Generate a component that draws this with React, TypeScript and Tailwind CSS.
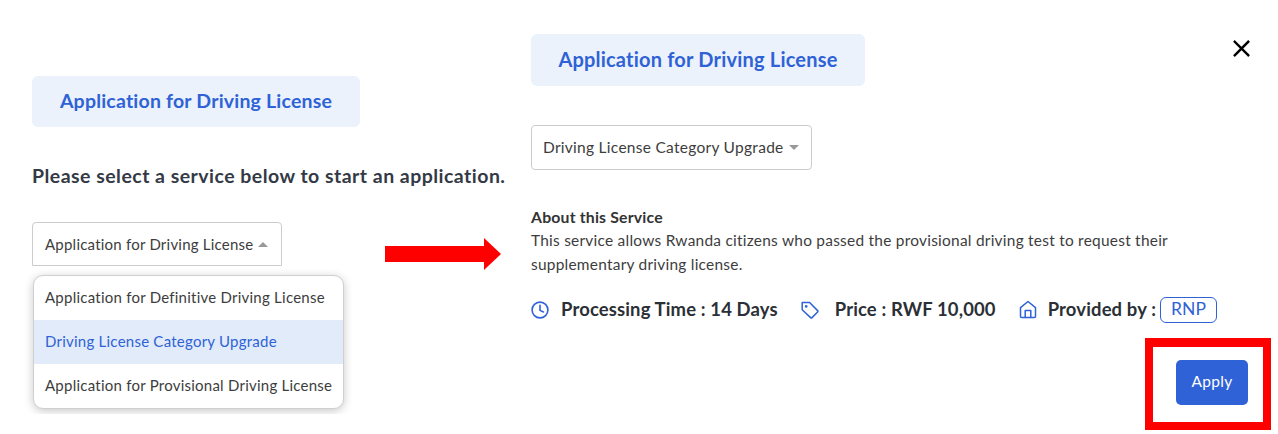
import React from "react";

function Caret({ up }: { up?: boolean }) {
  return (
    <svg width="10" height="5" viewBox="0 0 10 5" className="shrink-0">
      <path d={up ? "M0 5 L5 0 L10 5 Z" : "M0 0 L5 5 L10 0 Z"} fill="#999999" />
    </svg>
  );
}

export default function App() {
  return (
    <div className="relative flex h-[434px] w-[1278px] overflow-hidden bg-white font-['Lato',sans-serif] text-[#3d3d3d]">
      {/* left column */}
      <div className="h-[414px] w-[531px] shrink-0 pt-[76px]">
        <div className="ml-[32px] flex h-[51px] w-[328px] items-center justify-center rounded-[6px] bg-[#ebf2fb] pb-[2px] text-[19.5px] font-bold text-[#2f62d6] tracking-[0.01em]">
          Application for Driving License
        </div>
        <div className="ml-[32px] mt-[37px] text-[19.5px] leading-[24px] font-bold tracking-[0.024em] text-[#343a45] whitespace-nowrap">
          Please select a service below to start an application.
        </div>
        <div className="ml-[32px] mt-[34px] flex h-[44px] w-[250px] items-center gap-[5px] rounded-t-[4px] border border-[#cccccc] pl-[12px] text-[15px] tracking-[0.015em] whitespace-nowrap">
          Application for Driving License
          <Caret up />
        </div>
        <div className="ml-[24px] h-[148px] w-[340px] overflow-hidden pl-[9px] pt-[9px]">
          <div className="w-[311px] overflow-hidden rounded-[10px] border border-[#d0d0d0] bg-white text-[15px] tracking-[0.016em] shadow-[0_2px_10px_rgba(0,0,0,0.22)]">
            <div className="flex h-[44px] items-center pb-[2px] pl-[11px] whitespace-nowrap">Application for Definitive Driving License</div>
            <div className="flex h-[44px] items-center bg-[#e1ebfa] pb-[2px] pl-[11px] text-[#2f62d6] whitespace-nowrap">Driving License Category Upgrade</div>
            <div className="flex h-[44px] items-center pb-[2px] pl-[11px] whitespace-nowrap">Application for Provisional Driving License</div>
          </div>
        </div>
      </div>

      {/* right column */}
      <div className="flex-1 pt-[34px]">
        <div className="flex h-[52px] w-[334px] items-center justify-center rounded-[6px] bg-[#ebf2fb] pb-[2px] text-[20px] font-bold tracking-[0.01em] text-[#2f62d6]">
          Application for Driving License
        </div>
        <div className="mt-[39px] flex h-[45px] w-[281px] items-center gap-[5px] rounded-[4px] border border-[#cccccc] pl-[11px] text-[15.5px] tracking-[0.018em] whitespace-nowrap">
          Driving License Category Upgrade
          <Caret />
        </div>
        <div className="mt-[37px] text-[15.8px] font-bold leading-[20px] tracking-[0.012em] text-[#333333]">About this Service</div>
        <div className="mt-[1px] w-[680px] text-[15.45px] leading-[24px] tracking-[0.016em]">
          This service allows Rwanda citizens who passed the provisional driving test to request their supplementary driving license.
        </div>
        <div className="mt-[20px] flex h-[27px] items-center text-[18.45px] font-bold tracking-[0.008em] text-[#2b2f36] whitespace-nowrap">
          <svg width="18" height="18" viewBox="0 0 18 18" fill="none" stroke="#2f62d6" strokeWidth="1.6" strokeLinecap="round" strokeLinejoin="round">
            <circle cx="9" cy="9" r="7.9" />
            <path d="M9 4.4V9.4L12.4 11" />
          </svg>
          <span className="ml-[12px]">Processing Time : 14 Days</span>
          <svg className="ml-[23px]" width="18" height="18" viewBox="0 0 18 18" fill="none" stroke="#2f62d6" strokeWidth="1.5" strokeLinecap="round" strokeLinejoin="round">
            <path d="M1.2 1.5H8.6L16.6 9.6A1 1 0 0 1 16.6 11L11 16.6A1 1 0 0 1 9.6 16.6L1.2 8.8Z" />
            <circle cx="5.2" cy="5.4" r="0.6" fill="#2f62d6" />
          </svg>
          <span className="ml-[16px]">Price : RWF 10,000</span>
          <svg className="ml-[23px]" width="18" height="19" viewBox="0 0 18 19" fill="none" stroke="#2f62d6" strokeWidth="1.5" strokeLinecap="round" strokeLinejoin="round">
            <path d="M1.5 7.6L9 1.5L16.5 7.6V16.6A1 1 0 0 1 15.5 17.6H2.5A1 1 0 0 1 1.5 16.6Z" />
            <path d="M6.2 17.5V10.4H11.8V17.5" />
          </svg>
          <span className="ml-[11px]">Provided by :</span>
          <span className="ml-[4px] flex h-[26px] w-[57px] items-center justify-center rounded-[6px] border border-[#2f62d6] text-[17.5px] font-normal text-[#2f62d6]">RNP</span>
        </div>
        <div className="mt-[37px] flex justify-end pr-[30px]">
          <button className="h-[45px] w-[72px] rounded-[5px] bg-[#2f62d6] pb-[1px] text-[15.5px] tracking-[0.018em] text-white">Apply</button>
        </div>
      </div>

      {/* close */}
      <svg className="absolute left-[1233px] top-[40px]" width="17" height="17" viewBox="0 0 17 17" stroke="#000000" strokeWidth="2.4" strokeLinecap="square">
        <path d="M1.8 1.8L15.2 15.2M15.2 1.8L1.8 15.2" />
      </svg>

      {/* annotations */}
      <svg className="absolute left-[385px] top-[238px]" width="116" height="32" viewBox="0 0 116 32">
        <path d="M0 8H99V0L116 16L99 32V24H0Z" fill="#ff0000" />
      </svg>
      <div className="absolute left-[1145px] top-[338px] h-[92px] w-[126px] border-[8px] border-t-[9px] border-[#ff0000]" />
    </div>
  );
}
